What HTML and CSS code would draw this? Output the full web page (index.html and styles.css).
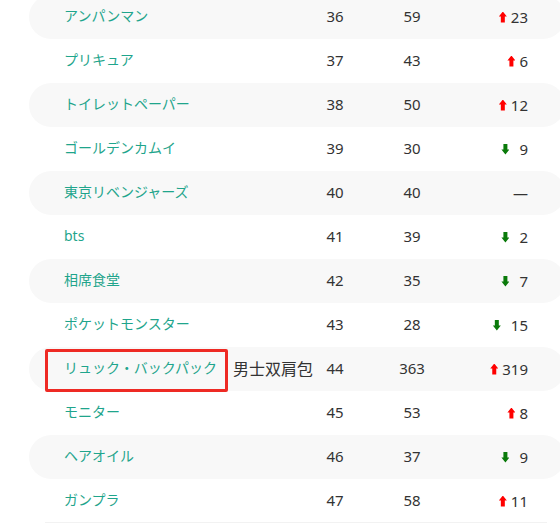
FILE: index.html
```html
<!DOCTYPE html>
<html lang="ja">
<head>
<meta charset="utf-8">
<link rel="stylesheet" href="styles.css">
</head>
<body>
<div class="page">
  <div class="list">
    <div class="row alt"><span class="name">アンパンマン</span><span class="num">36</span><span class="num">59</span><span class="chg"><i class="up"></i>23</span></div>
    <div class="row"><span class="name">プリキュア</span><span class="num">37</span><span class="num">43</span><span class="chg"><i class="up"></i>6</span></div>
    <div class="row alt"><span class="name">トイレットペーパー</span><span class="num">38</span><span class="num">50</span><span class="chg"><i class="up"></i>12</span></div>
    <div class="row"><span class="name">ゴールデンカムイ</span><span class="num">39</span><span class="num">30</span><span class="chg"><i class="down"></i>9</span></div>
    <div class="row alt"><span class="name">東京リベンジャーズ</span><span class="num">40</span><span class="num">40</span><span class="chg">—</span></div>
    <div class="row"><span class="name">bts</span><span class="num">41</span><span class="num">39</span><span class="chg"><i class="down"></i>2</span></div>
    <div class="row alt"><span class="name">相席食堂</span><span class="num">42</span><span class="num">35</span><span class="chg"><i class="down"></i>7</span></div>
    <div class="row"><span class="name">ポケットモンスター</span><span class="num">43</span><span class="num">28</span><span class="chg"><i class="down"></i>15</span></div>
    <div class="row alt"><span class="name highlight">リュック・バックパック<span class="box"></span><span class="note">男士双肩包</span></span><span class="num">44</span><span class="num">363</span><span class="chg"><i class="up"></i>319</span></div>
    <div class="row"><span class="name">モニター</span><span class="num">45</span><span class="num">53</span><span class="chg"><i class="up"></i>8</span></div>
    <div class="row alt"><span class="name">ヘアオイル</span><span class="num">46</span><span class="num">37</span><span class="chg"><i class="down"></i>9</span></div>
    <div class="row last"><span class="name">ガンプラ</span><span class="num">47</span><span class="num">58</span><span class="chg"><i class="up"></i>11</span></div>
  </div>
</div>
</body>
</html>
```
FILE: styles.css
```css
html, body {
  margin: 0;
  padding: 0;
  background: #fff;
}
.page {
  width: 560px;
  height: 524px;
  overflow: hidden;
  font-family: "Noto Sans", "Noto Sans CJK JP", sans-serif;
  font-size: 14px;
  color: #333;
}
.list {
  margin-top: -5px;
  margin-left: 29px;
  width: 536px;
}
.row {
  display: grid;
  grid-template-columns: 270px 72px 82px 75px 1fr;
  align-items: center;
  height: 44px;
  border-radius: 22px;
}
.row.alt {
  background: #f8f8f8;
}
.row.last {
  position: relative;
}
.row.last::after {
  content: "";
  position: absolute;
  left: 16px;
  right: 18px;
  bottom: 0;
  height: 1px;
  background: #f2f2f2;
}
.name {
  padding-left: 35px;
  color: #1fa58c;
  position: relative;
  line-height: 42px;
  padding-bottom: 2px;
}
.num {
  text-align: center;
  font-size: 15px;
  padding-bottom: 3px;
}
.chg {
  font-size: 15px;
  display: flex;
  justify-content: flex-end;
  align-items: center;
}
.up, .down {
  display: inline-block;
  width: 8px;
  height: 11px;
  margin-right: 4px;
}
.up {
  background: #f00;
  clip-path: polygon(50% 0, 100% 45%, 75% 45%, 75% 100%, 25% 100%, 25% 45%, 0 45%);
}
.down {
  background: #0a7a0a;
  clip-path: polygon(25% 0, 75% 0, 75% 55%, 100% 55%, 50% 100%, 0 55%, 25% 55%);
  margin-right: 10px;
}
.box {
  position: absolute;
  left: 16px;
  top: 2px;
  width: 177px;
  height: 37px;
  border: 3px solid #ee2a24;
  border-radius: 2px;
}
.note {
  position: absolute;
  left: 204px;
  top: 0;
  color: #333;
  font-size: 16px;
  font-family: "Noto Sans CJK SC", sans-serif;
  white-space: nowrap;
}
```
